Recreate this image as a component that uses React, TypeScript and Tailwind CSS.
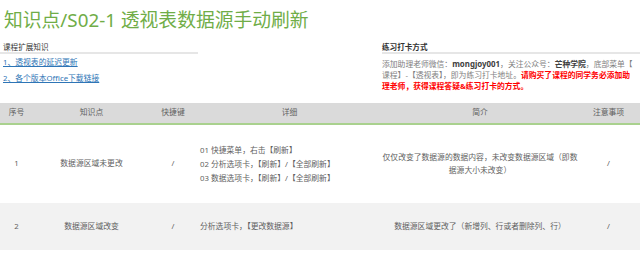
const FONT = { fontFamily: '"Noto Sans", "Noto Sans CJK SC", sans-serif' };

const cols = ["w-[33px]", "w-[117px]", "w-[46px]", "w-[187px]", "w-[194px]", "w-[63px]"];

function Cell({ i, children, left }: { i: number; children: React.ReactNode; left?: boolean }) {
  return (
    <div
      className={`${cols[i]} flex shrink-0 flex-col justify-center whitespace-nowrap ${
        left ? "items-start pl-[4px]" : "items-center text-center"
      }`}
    >
      {children}
    </div>
  );
}

export default function App() {
  return (
    <main className="h-[254px] w-[640px] overflow-hidden bg-white text-[#5f5f5f]" style={FONT}>
      <h1 className="h-[40px] pl-[4px] text-[18.8px] leading-[40px] font-normal text-[#70ad47]">
        知识点/S02-1 透视表数据源手动刷新
      </h1>

      <section className="flex h-[63px] text-[7.8px]">
        <div className="w-[198px] shrink-0">
          <h2 className="mt-[1px] h-[13px] border-b-2 border-[#e6e6e6] pl-[3px] text-[7.6px] leading-[13px] text-[#333]">
            课程扩展知识
          </h2>
          <div className="pl-[3px] leading-[16px] text-[#2e75b6]">
            <a href="#" className="block underline">1、透视表的延迟更新</a>
            <a href="#" className="block underline">2、各个版本Office下载链接</a>
          </div>
        </div>
        <div className="ml-[184px] w-[258px] shrink-0">
          <h2 className="mt-[1px] h-[13px] border-b-2 border-[#e6e6e6] text-[7.6px] font-semibold leading-[13px] text-[#333]">
            练习打卡方式
          </h2>
          <p className="mt-[5px] whitespace-nowrap leading-[11px] text-[#7f7f7f]">
            添加助理老师微信：<b className="text-[7.9px] text-[#404040]">mongjoy001</b>，关注公众号：
            <b className="text-[#404040]">芒种学院</b>，底部菜单【
            <br />
            课程】-【透视表】，即为练习打卡地址。<b className="text-[#ff0000]">请购买了课程的同学务必添加助</b>
            <br />
            <b className="text-[#ff0000]">理老师，获得课程答疑&amp;练习打卡的方式。</b>
          </p>
        </div>
      </section>

      <div className="text-[7.8px]">
        <div className="flex h-[22px] border-b-2 border-[#a9d18e] bg-[#dadada]">
          <Cell i={0}>序号</Cell>
          <Cell i={1}>知识点</Cell>
          <Cell i={2}>快捷键</Cell>
          <Cell i={3}>详细</Cell>
          <Cell i={4}>简介</Cell>
          <Cell i={5}>注意事项</Cell>
        </div>
        <div className="flex h-[78px] bg-white">
          <Cell i={0}>1</Cell>
          <Cell i={1}>数据源区域未更改</Cell>
          <Cell i={2}>/</Cell>
          <Cell i={3} left>
            <div className="leading-[14px]">
              01 快捷菜单，右击【刷新】
              <br />
              02 分析选项卡，【刷新】/【全部刷新】
              <br />
              03 数据选项卡，【刷新】/【全部刷新】
            </div>
          </Cell>
          <Cell i={4}>
            <div className="leading-[13px]">
              仅仅改变了数据源的数据内容，未改变数据源区域（即数
              <br />
              据源大小未改变）
            </div>
          </Cell>
          <Cell i={5}>/</Cell>
        </div>
        <div className="flex h-[47px] bg-[#f2f2f2]">
          <Cell i={0}>2</Cell>
          <Cell i={1}>数据源区域改变</Cell>
          <Cell i={2}>/</Cell>
          <Cell i={3} left>分析选项卡，【更改数据源】</Cell>
          <Cell i={4}>数据源区域更改了（新增列、行或者删除列、行）</Cell>
          <Cell i={5}>/</Cell>
        </div>
      </div>
    </main>
  );
}
